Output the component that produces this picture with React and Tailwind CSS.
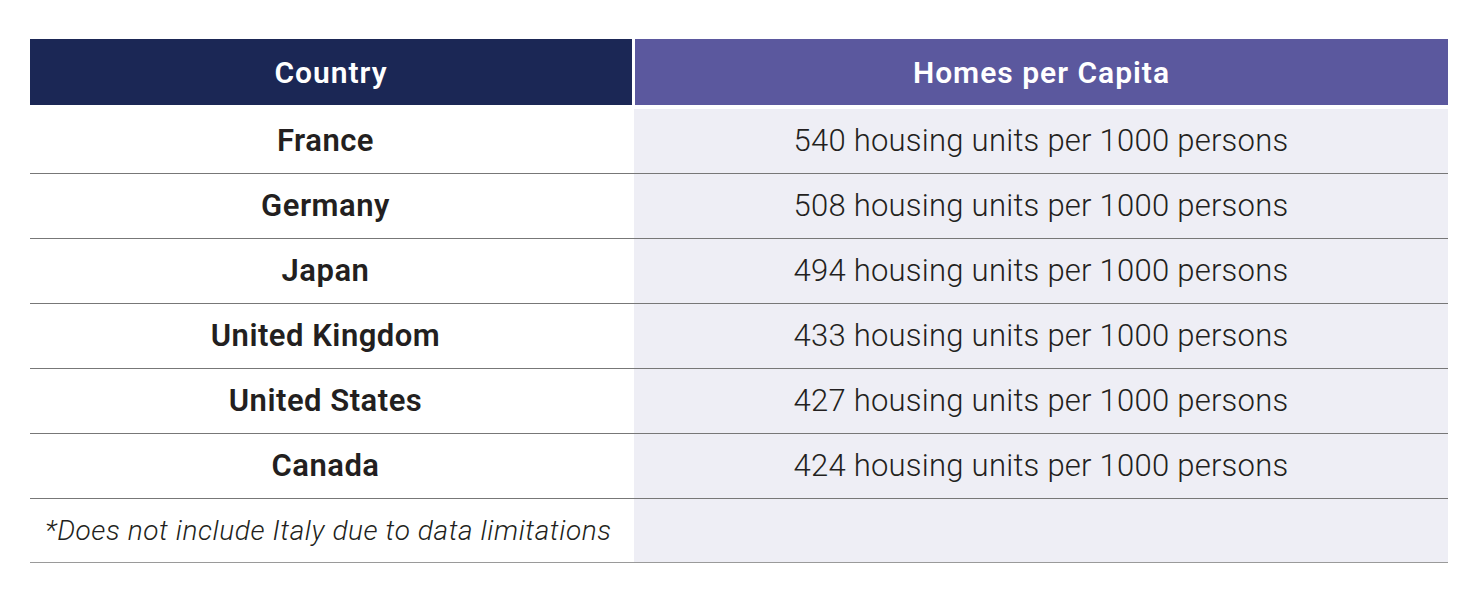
const rows = [
  { country: 'France', value: '540 housing units per 1000 persons' },
  { country: 'Germany', value: '508 housing units per 1000 persons' },
  { country: 'Japan', value: '494 housing units per 1000 persons' },
  { country: 'United Kingdom', value: '433 housing units per 1000 persons' },
  { country: 'United States', value: '427 housing units per 1000 persons' },
  { country: 'Canada', value: '424 housing units per 1000 persons' },
]

export default function App() {
  return (
    <div className="min-h-screen bg-white pl-[30px] pt-[39px] font-['Roboto',sans-serif] text-[#231f20]">
      <div className="w-[1418px]">
        {/* header */}
        <div className="grid h-[66px] grid-cols-[602px_1fr] text-[30px] font-semibold tracking-[1px] text-white">
          <div className="flex items-center justify-center bg-[#1b2755]">Country</div>
          <div className="ml-[3px] flex items-center justify-center bg-[#5b589e]">
            Homes per Capita
          </div>
        </div>

        <div className="mt-[4px]">
          {rows.map((row) => (
            <div
              key={row.country}
              className="grid h-[65px] grid-cols-[604px_1fr] border-b border-[#777777]"
            >
              <div className="flex items-center justify-center pr-[13px] text-[31px] font-semibold tracking-[0.5px]">
                {row.country}
              </div>
              <div className="flex items-center justify-center bg-[#eeeef5] text-[31px] font-light tracking-[0.25px]">
                {row.value}
              </div>
            </div>
          ))}

          <div className="grid h-[64px] grid-cols-[604px_1fr] border-b border-[#9a9a9a]">
            <div className="flex items-center pl-[15px] text-[28px] font-light italic tracking-[0.6px]">
              *Does not include Italy due to data limitations
            </div>
            <div className="bg-[#eeeef5]" />
          </div>
        </div>
      </div>
    </div>
  )
}
